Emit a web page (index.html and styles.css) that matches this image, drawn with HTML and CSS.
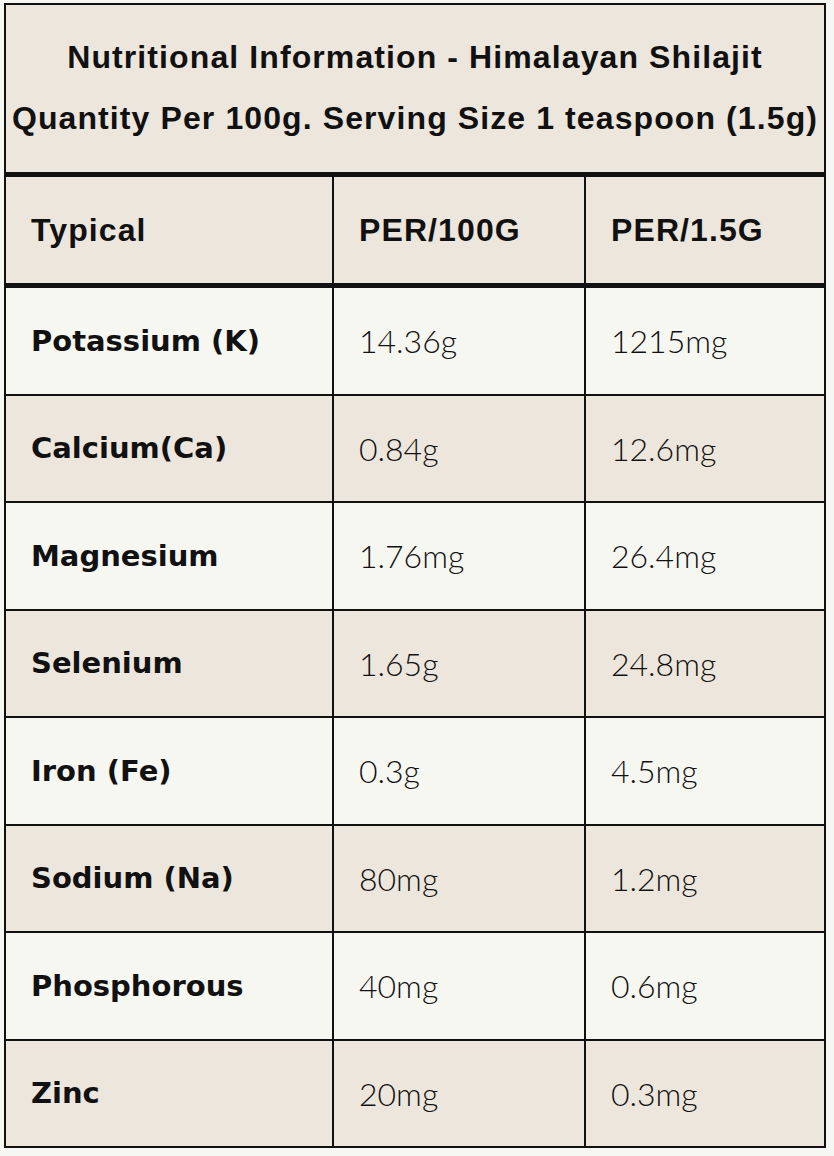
FILE: index.html
```html
<!DOCTYPE html>
<html lang="en">
<head>
<meta charset="utf-8">
<title>Nutritional Information - Himalayan Shilajit</title>
<link rel="stylesheet" href="styles.css">
</head>
<body>
<div class="nutri">
  <div class="title">Nutritional Information - Himalayan Shilajit<br>Quantity Per 100g. Serving Size 1 teaspoon (1.5g)</div>
  <div class="cell head">Typical</div>
  <div class="cell head">PER/100G</div>
  <div class="cell head">PER/1.5G</div>

  <div class="cell label light">Potassium (K)</div>
  <div class="cell val light">14.36g</div>
  <div class="cell val light">1215mg</div>

  <div class="cell label beige">Calcium(Ca)</div>
  <div class="cell val beige">0.84g</div>
  <div class="cell val beige">12.6mg</div>

  <div class="cell label light">Magnesium</div>
  <div class="cell val light">1.76mg</div>
  <div class="cell val light">26.4mg</div>

  <div class="cell label beige">Selenium</div>
  <div class="cell val beige">1.65g</div>
  <div class="cell val beige">24.8mg</div>

  <div class="cell label light">Iron (Fe)</div>
  <div class="cell val light">0.3g</div>
  <div class="cell val light">4.5mg</div>

  <div class="cell label beige">Sodium (Na)</div>
  <div class="cell val beige">80mg</div>
  <div class="cell val beige">1.2mg</div>

  <div class="cell label light">Phosphorous</div>
  <div class="cell val light">40mg</div>
  <div class="cell val light">0.6mg</div>

  <div class="cell label beige">Zinc</div>
  <div class="cell val beige">20mg</div>
  <div class="cell val beige">0.3mg</div>
</div>
</body>
</html>
```
FILE: styles.css
```css
html, body {
  margin: 0;
  padding: 0;
  background: #f6f6f2;
}
body {
  padding: 3px 0 0 4px;
  color: #111111;
}
.nutri {
  display: grid;
  grid-template-columns: 326px 250px 238px;
  grid-template-rows: 170px 109px repeat(8, 105.5px);
  column-gap: 2px;
  row-gap: 2px;
  width: max-content;
  background: #111111;
  border: 2px solid #111111;
}
.title {
  grid-column: 1 / -1;
  margin-bottom: 3px;
  background: #ede6dc;
  box-sizing: border-box;
  padding-top: 22px;
  text-align: center;
  font-family: "Liberation Sans", Arial, sans-serif;
  font-weight: 700;
  font-size: 32px;
  line-height: 61px;
  letter-spacing: 1.1px;
  white-space: nowrap;
}
.cell {
  display: flex;
  align-items: center;
  padding-left: 25px;
  box-sizing: border-box;
}
.head {
  margin-bottom: 3px;
  background: #ede6dc;
  font-family: "Liberation Sans", Arial, sans-serif;
  font-weight: 700;
  font-size: 32px;
  letter-spacing: 1.1px;
}
.label {
  font-family: "DejaVu Sans", sans-serif;
  font-weight: 700;
  font-size: 29px;
}
.val {
  font-family: "Lato", sans-serif;
  font-weight: 300;
  font-size: 32px;
}
.light {
  background: #f7f7f2;
}
.beige {
  background: #ede6dc;
}
```
